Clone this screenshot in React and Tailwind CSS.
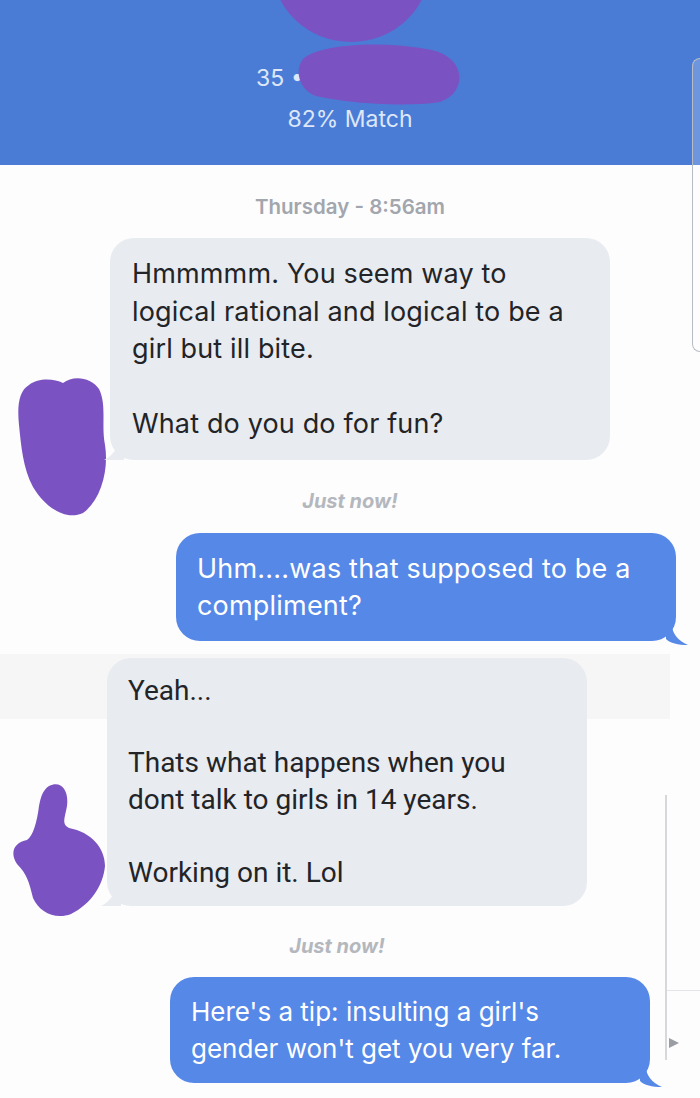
export default function App() {
  return (
    <div className="w-[700px] h-[1098px] overflow-hidden bg-[#fdfdfd] relative" style={{ fontFamily: "Inter, 'Noto Sans', sans-serif" }}>
      {/* header */}
      <div className="relative h-[165px] bg-[#4a7cd6] flex flex-col items-center pt-[63px] text-[#dde7f8] text-[23px] leading-[30px]">
        <div className="w-[200px] pl-[6px]">35 •</div>
        <div className="mt-[11px]">82% Match</div>
        <svg className="absolute left-[260px] top-0" width="210" height="110" viewBox="0 0 210 110">
          <ellipse cx="91" cy="-34" rx="79" ry="76" fill="#7b52c1" />
          <path d="M44 58 C62 44 120 40 172 50 C206 58 208 92 180 102 C140 108 80 102 56 96 C38 90 34 68 44 58 Z" fill="#7b52c1" />
        </svg>
        <div className="absolute right-0 top-[58px] w-[8px] h-[294px] border-l border-y border-[#b8bcc4] rounded-l-[8px] bg-white/20" />
      </div>

      {/* messages */}
      <div className="flex flex-col pt-[28px]">
        <div className="text-center text-[20.5px] leading-[28px] font-semibold text-[#a2a6ad]">Thursday - 8:56am</div>

        <div className="relative mt-[17px] ml-[110px] w-[500px]">
          <svg className="absolute left-[-95px] top-[137px]" width="92" height="142" viewBox="0 0 92 142">
            <path d="M14 10 C24 2 40 4 48 8 C58 0 76 2 84 14 C92 30 86 50 90 70 C94 95 86 125 68 138 C50 146 30 132 18 112 C8 94 6 70 4 50 C2 30 4 16 14 10 Z" fill="#7b52c1" />
          </svg>
          <div className="bg-[#e8ebf0] rounded-[24px] px-[22px] py-[17px] text-[27px] leading-[37.5px] tracking-[0.15px] text-[#222427]">
            Hmmmmm. You seem way to<br />logical rational and logical to be a<br />girl but ill bite.<br /><br />What do you do for fun?
          </div>
          <svg className="absolute left-[-6px] bottom-0" width="20" height="16" viewBox="0 0 20 16">
            <path d="M20 0 L20 16 L0 16 C8 12 12 6 14 0 Z" fill="#e8ebf0" />
          </svg>
        </div>

        <div className="mt-[27px] text-center text-[20px] leading-[28px] font-bold italic text-[#b4b8be]">Just now!</div>

        <div className="relative mt-[18px] ml-[176px] w-[500px]">
          <div className="bg-[#5688e8] rounded-[24px] px-[21px] py-[17px] text-[27px] leading-[37px] tracking-[0.2px] text-white">
            Uhm....was that supposed to be a<br />compliment?
          </div>
          <svg className="absolute right-[-12px] bottom-[-4px]" width="22" height="20" viewBox="0 0 22 20">
            <path d="M0 0 L6 0 C6 8 12 16 22 20 C12 20 4 18 0 14 Z" fill="#5688e8" />
          </svg>
        </div>

        <div className="mt-[13px] w-[670px] bg-[#f6f6f7] h-[65px] -mb-[61px]" />

        <div className="relative ml-[107px] w-[480px]">
          <svg className="absolute left-[-98px] top-[124px]" width="100" height="136" viewBox="0 0 100 136">
            <path d="M40 4 C52 -2 60 8 58 24 C56 36 52 42 60 46 C82 50 96 66 96 84 C94 104 82 122 62 132 C46 138 30 130 24 116 C20 100 18 92 8 82 C0 70 6 60 18 58 C24 54 28 40 30 24 C32 14 34 8 40 4 Z" fill="#7b52c1" />
          </svg>
          <div className="bg-[#e8ebf0] rounded-[24px] pl-[21px] pr-[16px] py-[15px] text-[28px] leading-[36.4px] text-[#222427]" style={{ fontFamily: "Roboto, sans-serif" }}>
            Yeah...<br /><br />Thats what happens when you<br />dont talk to girls in 14 years.<br /><br />Working on it. Lol
          </div>
          <svg className="absolute left-[-6px] bottom-0" width="20" height="16" viewBox="0 0 20 16">
            <path d="M20 0 L20 16 L0 16 C8 12 12 6 14 0 Z" fill="#e8ebf0" />
          </svg>
        </div>

        <div className="mt-[26px] text-center text-[20px] leading-[28px] font-bold italic text-[#b4b8be] pr-[26px]">Just now!</div>

        <div className="relative mt-[17px] ml-[170px] w-[480px]">
          <div className="bg-[#5688e8] rounded-[24px] px-[21px] py-[16px] text-[26px] leading-[37px] text-white">
            Here's a tip: insulting a girl's<br />gender won't get you very far.
          </div>
          <svg className="absolute right-[-12px] bottom-[-4px]" width="22" height="20" viewBox="0 0 22 20">
            <path d="M0 0 L6 0 C6 8 12 16 22 20 C12 20 4 18 0 14 Z" fill="#5688e8" />
          </svg>
        </div>
      </div>

      {/* right edge overlay bits */}
      <div className="absolute left-[665px] top-[795px] w-[2px] h-[265px] bg-[#d6d8dc]" />
      <div className="absolute left-[667px] top-[990px] w-[33px] h-px bg-[#e3e5e8]" />
      <svg className="absolute left-[668px] top-[1037px]" width="12" height="12" viewBox="0 0 12 12">
        <path d="M1 1 L11 6 L1 11 Z" fill="#9a9ea4" />
      </svg>
    </div>
  );
}
